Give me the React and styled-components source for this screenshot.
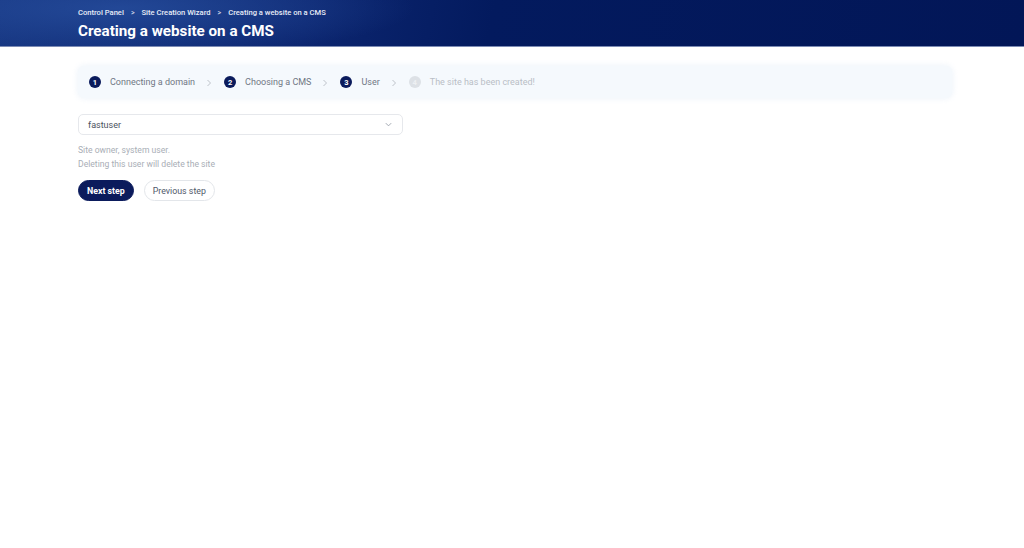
import React from 'react'
import styled, { createGlobalStyle } from 'styled-components'

const GlobalStyle = createGlobalStyle`
  html, body {
    margin: 0;
    padding: 0;
    background: #ffffff;
    font-family: Roboto, "Liberation Sans", sans-serif;
  }
`

const steps = [
  { n: 1, label: 'Connecting a domain', state: 'done' },
  { n: 2, label: 'Choosing a CMS', state: 'done' },
  { n: 3, label: 'User', state: 'active' },
  { n: 4, label: 'The site has been created!', state: 'todo' },
]

//Header with breadcrumbs and page title
const Header = styled.header`
  height: 47px;
  box-sizing: border-box;
  padding: 8px 0 0 78px;
  border-bottom: 1px solid #7c8bb4;
  background:
    radial-gradient(ellipse 420px 70px at 120px 8px, rgba(40, 80, 160, 0.75), rgba(40, 80, 160, 0) 70%),
    linear-gradient(100deg, #163580 0%, #0c2670 30%, #031a5e 48%, #021657 100%);
  color: #ffffff;
`

const Crumbs = styled.nav`
  display: flex;
  align-items: center;
  gap: 7px;
  font-size: 7.6px;
  font-weight: 500;
  line-height: 10px;
  color: #e8ecf7;
`

const Sep = styled.span`
  font-size: 7px;
  opacity: 0.85;
`

const Title = styled.h1`
  margin: 3px 0 0;
  font-size: 15.2px;
  font-weight: 700;
  line-height: 20px;
`

const Content = styled.main`
  padding: 19px 72px 0 78px;
`

const Steps = styled.div`
  display: flex;
  align-items: center;
  height: 32px;
  padding: 0 11px;
  border-radius: 6px;
  background: #f5f9fd;
  box-shadow: 0 0 6px rgba(220, 232, 245, 0.6);
`

const Step = styled.div`
  display: flex;
  align-items: center;
  gap: 9px;
  font-size: 9px;
  color: ${p => (p.$state === 'todo' ? '#b9bec6' : '#707784')};
`

const Circle = styled.span`
  width: 12px;
  height: 12px;
  border-radius: 50%;
  display: inline-flex;
  align-items: center;
  justify-content: center;
  font-size: 7.5px;
  font-weight: 700;
  color: ${p => (p.$state === 'todo' ? '#eef0f3' : '#ffffff')};
  background: ${p => (p.$state === 'todo' ? '#dde1e6' : '#0b1b5c')};
`

const Arrow = styled.span`
  display: inline-flex;
  width: 6px;
  margin: 2px 12px 0 11px;
`

const Select = styled.div`
  margin-top: 16px;
  width: 325px;
  height: 21px;
  box-sizing: border-box;
  display: flex;
  align-items: center;
  justify-content: space-between;
  padding: 0 9px;
  border: 1px solid #e6e8ec;
  border-radius: 5px;
  font-size: 9px;
  color: #4b5260;
`

const Hint = styled.p`
  margin: 8px 0 0;
  font-size: 8.6px;
  line-height: 14px;
  color: #a9aeb6;
`

const Buttons = styled.div`
  display: flex;
  gap: 10px;
  margin-top: 9px;
`

const Button = styled.button`
  height: 21px;
  padding: 0 8px;
  border-radius: 11px;
  font-family: inherit;
  font-size: 8.8px;
  font-weight: ${p => (p.$primary ? 700 : 400)};
  color: ${p => (p.$primary ? '#ffffff' : '#50586a')};
  background: ${p => (p.$primary ? '#0b1b5c' : '#ffffff')};
  border: 1px solid ${p => (p.$primary ? '#0b1b5c' : '#e3e6ea')};
  cursor: pointer;
`

const Chevron = () => (
  <svg width="9" height="9" viewBox="0 0 10 10" fill="none">
    <path d="M2 3.5 L5 6.5 L8 3.5" stroke="#9aa0aa" strokeWidth="1" />
  </svg>
)

const StepArrow = () => (
  <svg width="6" height="8" viewBox="0 0 6 8" fill="none">
    <path d="M1.5 1 L4.5 4 L1.5 7" stroke="#b6bbc3" strokeWidth="0.9" />
  </svg>
)

//Site creation wizard, user step
const App = () => {
  return <>
    <GlobalStyle />
    <Header>
      <Crumbs>
        <span>Control Panel</span>
        <Sep>&gt;</Sep>
        <span>Site Creation Wizard</span>
        <Sep>&gt;</Sep>
        <span>Creating a website on a CMS</span>
      </Crumbs>
      <Title>Creating a website on a CMS</Title>
    </Header>
    <Content>
      {/* Wizard progress */}
      <Steps>
        {steps.map((s, i) => (
          <React.Fragment key={s.n}>
            <Step $state={s.state}>
              <Circle $state={s.state}>{s.n}</Circle>
              {s.label}
            </Step>
            {i < steps.length - 1 && <Arrow><StepArrow /></Arrow>}
          </React.Fragment>
        ))}
      </Steps>
      <Select>
        <span>fastuser</span>
        <Chevron />
      </Select>
      <Hint>
        Site owner, system user.<br />
        Deleting this user will delete the site
      </Hint>
      <Buttons>
        <Button $primary>Next step</Button>
        <Button>Previous step</Button>
      </Buttons>
    </Content>
  </>
}

export default App
